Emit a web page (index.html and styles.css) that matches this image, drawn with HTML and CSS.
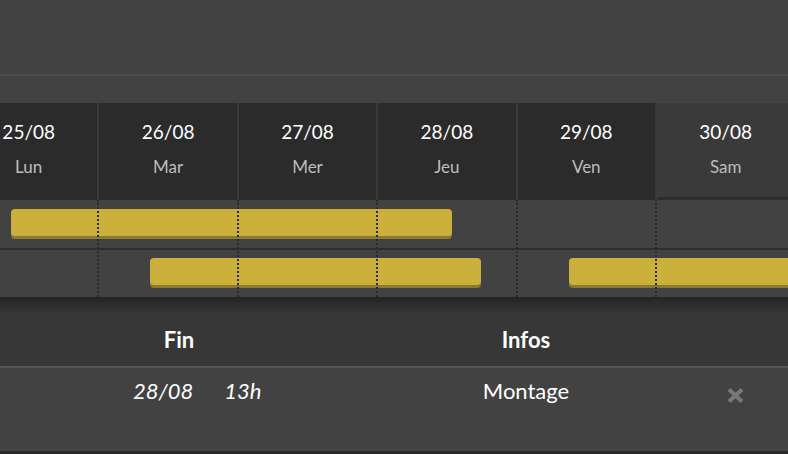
FILE: index.html
```html
<!DOCTYPE html>
<html lang="fr">

<head>
    <meta charset="UTF-8">
    <meta name="viewport" content="width=device-width, initial-scale=1.0">
    <title>Planning</title>
    <link rel="stylesheet" href="styles.css">
</head>

<body>
    <div class="topbar"></div>
    <div class="toolbar"></div>

    <section class="gantt">
        <div class="days">
            <div class="day"><span class="date">25/08</span><span class="dayname">Lun</span></div>
            <div class="day"><span class="date">26/08</span><span class="dayname">Mar</span></div>
            <div class="day"><span class="date">27/08</span><span class="dayname">Mer</span></div>
            <div class="day"><span class="date">28/08</span><span class="dayname">Jeu</span></div>
            <div class="day"><span class="date">29/08</span><span class="dayname">Ven</span></div>
            <div class="day weekend"><span class="date">30/08</span><span class="dayname">Sam</span></div>
        </div>
        <div class="rows">
            <div class="row first">
                <div class="bar" style="left: 11px; width: 441px;"></div>
            </div>
            <div class="row">
                <div class="bar" style="left: 150px; width: 331px;"></div>
                <div class="bar" style="left: 569px; width: 260px;"></div>
            </div>
            <!-- lignes des jours par-dessus les barres -->
            <div class="gridlines">
                <div></div><div></div><div></div><div></div><div></div><div></div>
            </div>
        </div>
        <div class="gantt-foot"></div>
    </section>

    <section class="list">
        <div class="list-head">
            <div class="col-fin">Fin</div>
            <div class="col-infos">Infos</div>
            <div></div>
        </div>
        <div class="list-row">
            <div class="col-fin"><span>28/08</span><span>13h</span></div>
            <div class="col-infos">Montage</div>
            <div class="col-action">
                <svg width="19" height="17" viewBox="0 0 19 17">
                    <path d="M3 2.5 L16 14.5 M16 2.5 L3 14.5" stroke="#787878" stroke-width="4.2" />
                </svg>
            </div>
        </div>
    </section>
</body>

</html>
```

FILE: styles.css
```css
body {
    margin: 0;
    background-color: #424242;
    font-family: Lato, "Open Sans", sans-serif;
    color: white;
    width: 788px;
    height: 454px;
    overflow: hidden;
}

.topbar {
    height: 74px;
    border-bottom: 2px solid #4d4d4d;
}

.toolbar {
    height: 27px;
}

.gantt {
    overflow: hidden;
}

.days,
.gridlines {
    display: grid;
    grid-template-columns: repeat(6, 139.4px);
    margin-left: -40px;
}

.day {
    box-sizing: border-box;
    height: 97px;
    background-color: #2b2b2b;
    border-right: 2px solid #3a3a3a;
    display: flex;
    flex-direction: column;
    align-items: center;
    padding-top: 17px;
}

.day.weekend {
    background-color: #3a3a3a;
    border-bottom: 3px solid #2e2e2e;
}

.date {
    font-size: 19px;
    line-height: 24px;
}

.dayname {
    font-size: 17px;
    line-height: 20px;
    margin-top: 13px;
    color: #bdbdbd;
}

.rows {
    position: relative;
}

.row {
    position: relative;
    height: 47px;
}

.row.first {
    height: 48px;
    border-bottom: 2px solid #2e2e2e;
}

.bar {
    position: absolute;
    top: 8px;
    height: 27px;
    border-radius: 4px;
    background-color: #cbb03b;
    box-shadow: 0 3px 0 #8d7a2e;
}

.row.first .bar {
    top: 9px;
}

.gridlines {
    position: absolute;
    top: 0;
    bottom: 0;
    left: 0;
    pointer-events: none;
}

.gridlines div {
    border-right: 2px dotted #2a2a2a;
}

.gantt-foot {
    height: 18px;
    background: linear-gradient(#242424, #393939);
}

.list-head,
.list-row {
    display: grid;
    grid-template-columns: 358px 336px 1fr;
}

.list-head {
    height: 51px;
    background-color: #373737;
    border-bottom: 2px solid #555555;
    font-size: 22px;
    font-weight: bold;
    line-height: 50px;
    text-align: center;
}

.list-row {
    height: 73px;
    border-bottom: 3px solid #2b2b2b;
    font-size: 22px;
    line-height: 26px;
    padding-top: 10px;
}

.list-row .col-fin {
    font-style: italic;
    padding-left: 133px;
    display: flex;
    gap: 31px;
}

.list-row .col-infos {
    text-align: center;
}

.col-action {
    padding-left: 32px;
    padding-top: 5px;
}
```
